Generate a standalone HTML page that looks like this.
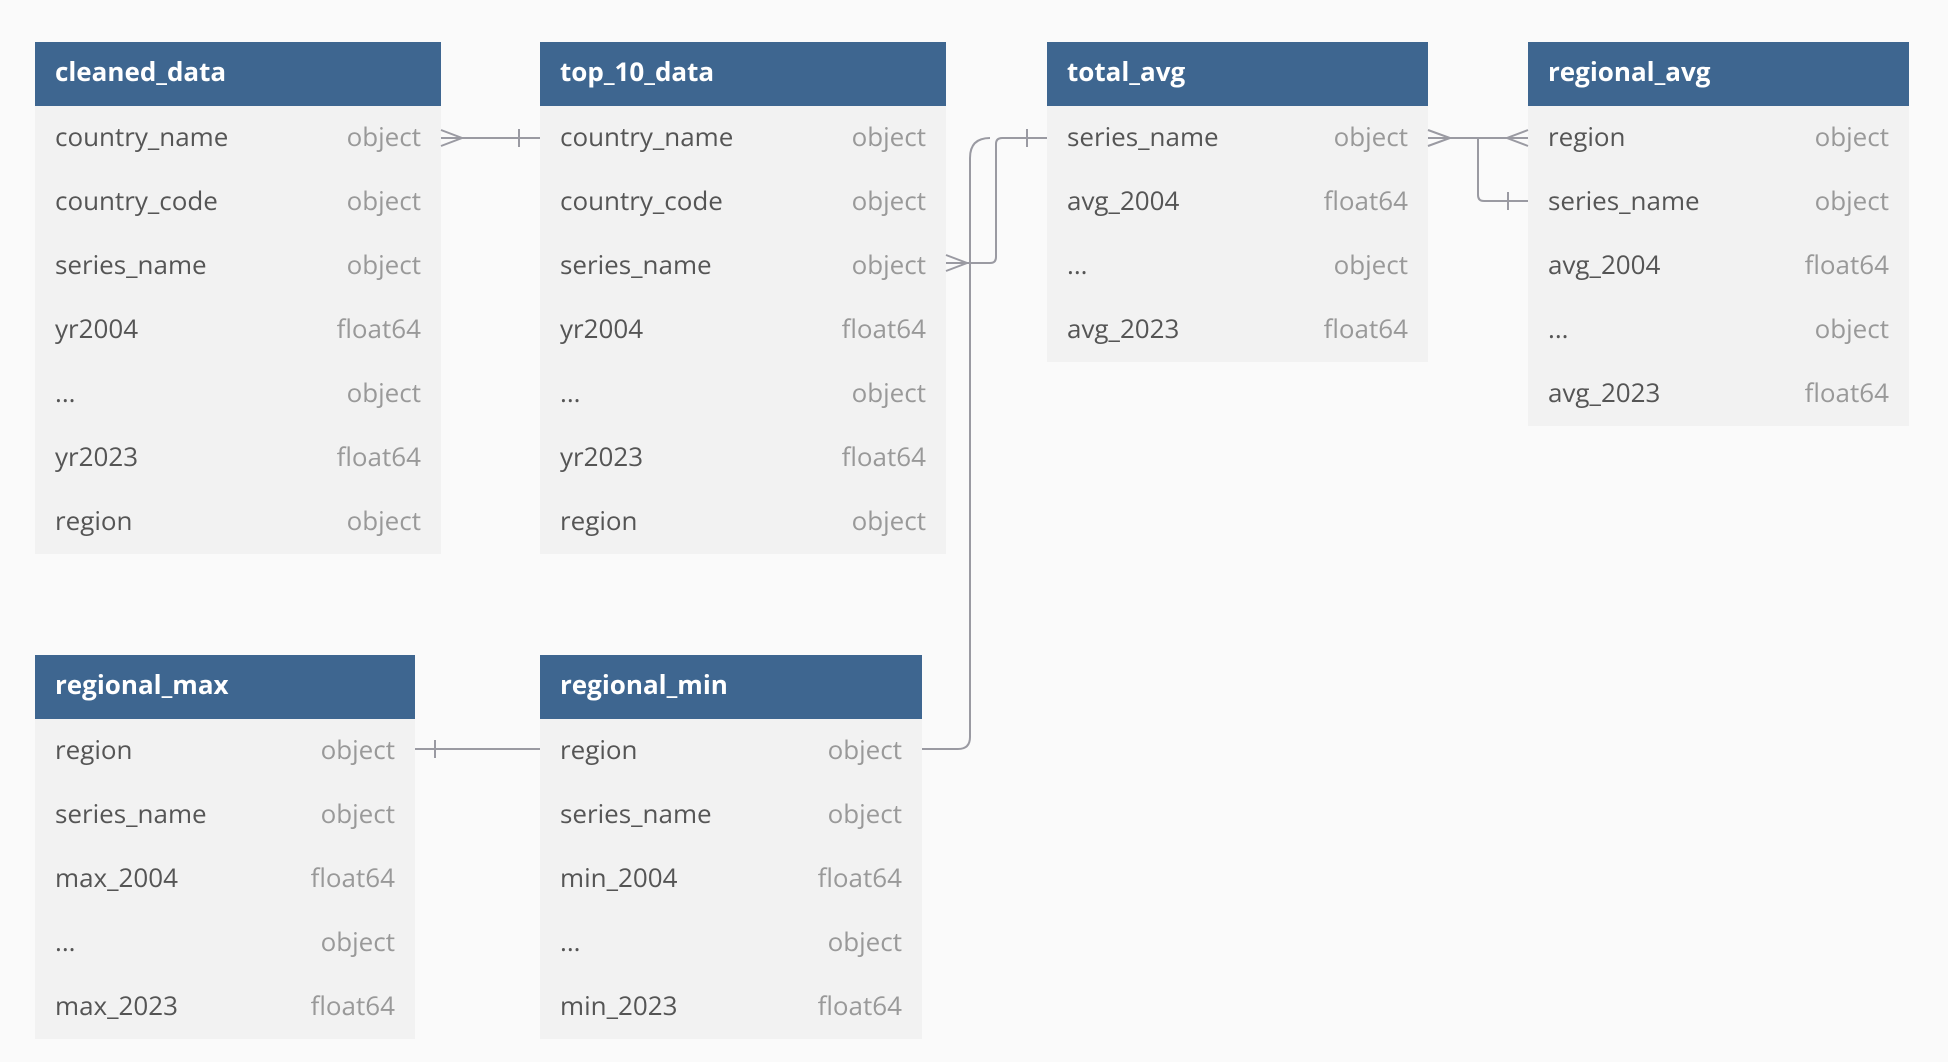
<!DOCTYPE html>
<html><head><meta charset="utf-8"><style>
body{margin:0;width:1948px;height:1062px;background:#fafafa;position:relative;overflow:hidden;font-family:"Open Sans","Liberation Sans",sans-serif}
.t{position:absolute;background:#f2f2f2}
.h{height:64px;background:#3e6690;color:#fff;font-weight:bold;font-size:26px;line-height:58px;padding-left:20px;box-sizing:border-box}
.r{height:64px;line-height:60px;font-size:26px;color:#555;padding:0 20px;display:flex;justify-content:space-between}
.r span:last-child{color:#999}
svg{position:absolute;left:0;top:0}
</style></head><body>
<div class="t" style="left:35px;top:42px;width:406px">
<div class="h">cleaned_data</div>
<div class="r"><span>country_name</span><span>object</span></div>
<div class="r"><span>country_code</span><span>object</span></div>
<div class="r"><span>series_name</span><span>object</span></div>
<div class="r"><span>yr2004</span><span>float64</span></div>
<div class="r"><span>...</span><span>object</span></div>
<div class="r"><span>yr2023</span><span>float64</span></div>
<div class="r"><span>region</span><span>object</span></div>
</div>
<div class="t" style="left:540px;top:42px;width:406px">
<div class="h">top_10_data</div>
<div class="r"><span>country_name</span><span>object</span></div>
<div class="r"><span>country_code</span><span>object</span></div>
<div class="r"><span>series_name</span><span>object</span></div>
<div class="r"><span>yr2004</span><span>float64</span></div>
<div class="r"><span>...</span><span>object</span></div>
<div class="r"><span>yr2023</span><span>float64</span></div>
<div class="r"><span>region</span><span>object</span></div>
</div>
<div class="t" style="left:1047px;top:42px;width:381px">
<div class="h">total_avg</div>
<div class="r"><span>series_name</span><span>object</span></div>
<div class="r"><span>avg_2004</span><span>float64</span></div>
<div class="r"><span>...</span><span>object</span></div>
<div class="r"><span>avg_2023</span><span>float64</span></div>
</div>
<div class="t" style="left:1528px;top:42px;width:381px">
<div class="h">regional_avg</div>
<div class="r"><span>region</span><span>object</span></div>
<div class="r"><span>series_name</span><span>object</span></div>
<div class="r"><span>avg_2004</span><span>float64</span></div>
<div class="r"><span>...</span><span>object</span></div>
<div class="r"><span>avg_2023</span><span>float64</span></div>
</div>
<div class="t" style="left:35px;top:655px;width:380px">
<div class="h">regional_max</div>
<div class="r"><span>region</span><span>object</span></div>
<div class="r"><span>series_name</span><span>object</span></div>
<div class="r"><span>max_2004</span><span>float64</span></div>
<div class="r"><span>...</span><span>object</span></div>
<div class="r"><span>max_2023</span><span>float64</span></div>
</div>
<div class="t" style="left:540px;top:655px;width:382px">
<div class="h">regional_min</div>
<div class="r"><span>region</span><span>object</span></div>
<div class="r"><span>series_name</span><span>object</span></div>
<div class="r"><span>min_2004</span><span>float64</span></div>
<div class="r"><span>...</span><span>object</span></div>
<div class="r"><span>min_2023</span><span>float64</span></div>
</div>
<svg width="1948" height="1062" fill="none" stroke="#9a9aa2" stroke-width="2">
<path d="M441 138H540M441 130L462 138L441 146M519 129V147"/>
<path d="M946 263H990Q996 263 996 257V144Q996 138 1002 138H1047M946 255L967 263L946 271M1027 129V147"/>
<path d="M922 749H958Q970 749 970 737V158Q970 138 990 138"/>
<path d="M415 749H540M435 740V758"/>
<path d="M1428 138H1528M1428 130L1450 138L1428 146M1528 130L1507 138L1528 146M1478 138V195Q1478 201 1484 201H1528M1508 192V210"/>
</svg>
</body></html>
